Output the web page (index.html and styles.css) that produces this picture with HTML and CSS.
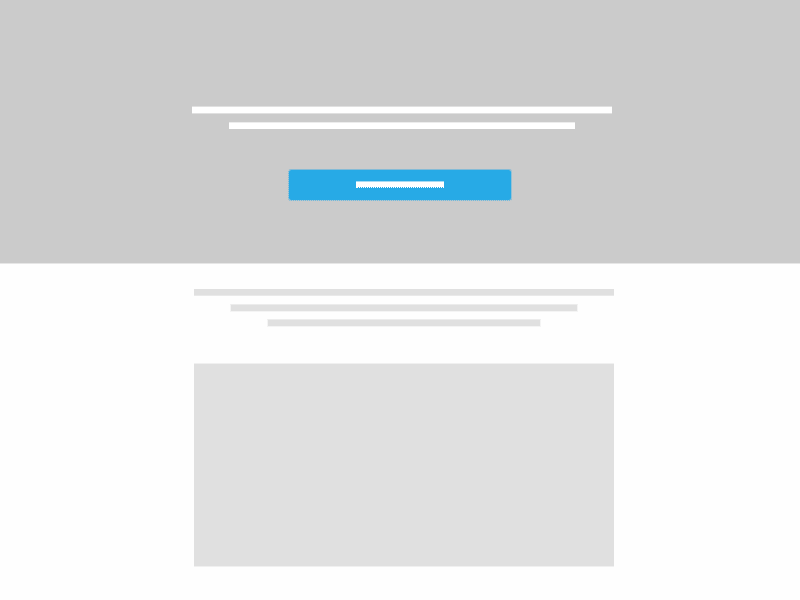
FILE: index.html
```html
<!DOCTYPE html>
<html lang="en">
<head>
  <meta charset="utf-8">
  <meta name="viewport" content="width=device-width, initial-scale=1">
  <title>Landing page wireframe</title>
  <link rel="stylesheet" href="styles.css">
</head>
<body>
  <header class="hero">
    <div class="lines">
      <div class="line line-full"></div>
      <div class="line line-medium"></div>
    </div>
    <button class="cta" type="button" aria-label="Primary action"><span class="cta-label"></span></button>
  </header>
  <main class="content">
    <div class="copy">
      <div class="line line-full"></div>
      <div class="line line-medium"></div>
      <div class="line line-short"></div>
    </div>
    <div class="media"></div>
  </main>
</body>
</html>
```
FILE: styles.css
```css
* {
  box-sizing: border-box;
}

body {
  margin: 0;
  min-height: 100vh;
  background: #fefefe;
}

.hero {
  display: flex;
  flex-direction: column;
  align-items: center;
  gap: 40px;
  padding: 106px 0 62px;
  background: #cbcbcb;
  background-clip: padding-box;
  border-bottom: 1px solid #e6e6e6;
}

.lines,
.copy {
  display: flex;
  flex-direction: column;
  align-items: center;
  gap: 8px;
  width: 100%;
}

.lines {
  padding-left: 4px;
}

.line {
  max-width: 100%;
  height: 8px;
  background-clip: padding-box;
}

.line-full {
  width: 420px;
}

.line-medium {
  width: 348px;
}

.line-short {
  width: 274px;
}

.hero .line {
  background-color: #fff;
  border: 0 solid #e0e0e0;
  border-width: 1px 0;
}

.hero .line-medium {
  width: 346px;
  height: 7px;
  border-top: 1px solid #ececec;
  border-bottom: 0;
}

.cta {
  display: flex;
  align-items: center;
  justify-content: center;
  width: 224px;
  max-width: 100%;
  height: 32px;
  padding: 0 0 2px;
  background: #27aae6;
  background-clip: padding-box;
  border: 1px dotted #5eb5dd;
  border-top: 1px solid #84bbd6;
  border-radius: 3px;
  cursor: pointer;
}

.cta-label {
  width: 88px;
  height: 7px;
  background: #fff;
  background-clip: padding-box;
  border-top: 1px solid #a5daf4;
  border-bottom: 1px dotted #fff;
}

.content {
  display: flex;
  flex-direction: column;
  align-items: center;
  gap: 36px;
  padding: 25px 0 33px 8px;
}

.content .line {
  background-color: #e0e0e0;
  border: 1px solid #f4f4f4;
  border-top: 1px solid #ececec;
}

.content .line-full {
  height: 7px;
  border: 0;
  border-bottom: 1px solid #e9e9e9;
}

.copy {
  gap: 7px;
}

.content .line-full + .line {
  margin-top: 1px;
}

.media {
  width: 420px;
  max-width: 100%;
  height: 204px;
  background: #e0e0e0;
  background-clip: padding-box;
  border: 0 solid #f0f0f0;
  border-width: 1px 0;
}
```
